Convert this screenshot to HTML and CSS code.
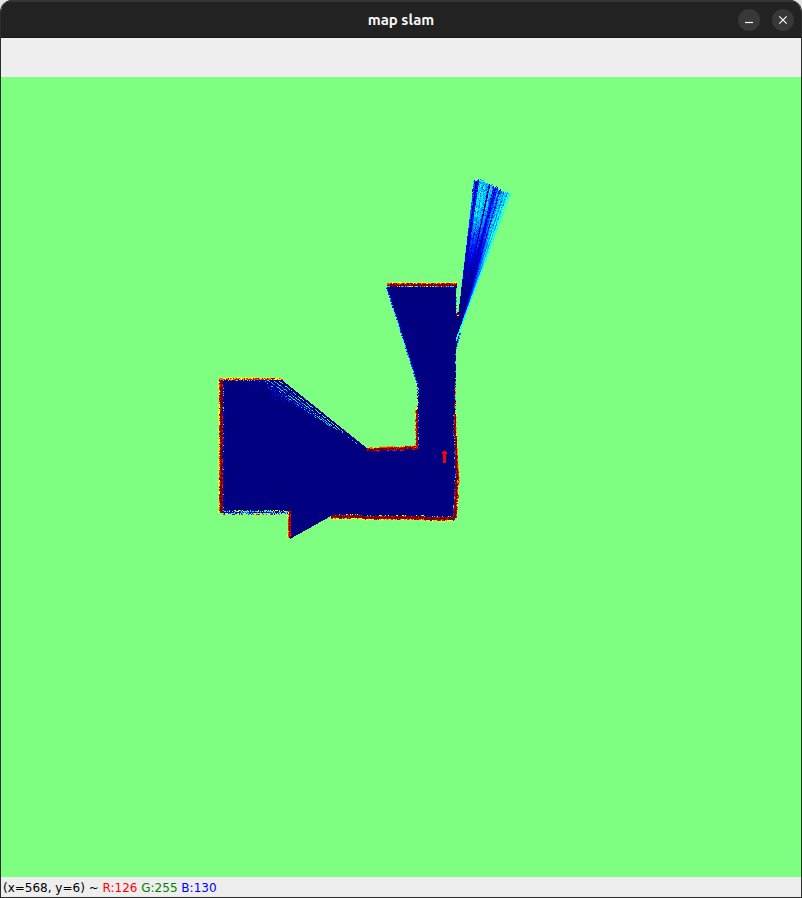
FILE: index.html
```html
<!DOCTYPE html>
<html lang="en">
<head>
<meta charset="utf-8">
<title>map slam</title>
<link rel="stylesheet" href="styles.css">
</head>
<body>
<main class="window">
  <header class="titlebar">
    <h1 class="title">map slam</h1>
    <div class="controls">
      <button class="control" type="button" aria-label="Minimize">
        <svg viewBox="0 0 22 22" aria-hidden="true"><path d="M7 13.5h8"/></svg>
      </button>
      <button class="control" type="button" aria-label="Close">
        <svg viewBox="0 0 22 22" aria-hidden="true"><path d="M7.3 7.3l7.4 7.4M14.7 7.3l-7.4 7.4"/></svg>
      </button>
    </div>
  </header>
  <div class="toolbar"></div>
  <canvas class="map" id="map" width="800" height="800"></canvas>
  <footer class="status">(x=568, y=6) ~ <span class="red">R:126</span> <span class="green">G:255</span> <span class="blue">B:130</span></footer>
</main>
<script src="map.js"></script>
</body>
</html>
```
FILE: styles.css
```css
* {
  box-sizing: border-box;
}

body {
  margin: 0;
  background: #e4e4e4;
}

.window {
  display: flex;
  flex-direction: column;
  min-height: 100vh;
  overflow: hidden;
  border: 1px solid #2c2c2c;
  border-top: 0;
  border-radius: 12px 12px 0 0;
  background: #eeeeee;
}

.titlebar {
  display: grid;
  grid-template-columns: 1fr auto 1fr;
  align-items: center;
  height: 38px;
  padding: 0 7px;
  border-top: 2px solid #353535;
  border-bottom: 1px solid #181818;
  background: #222222;
}

.title {
  grid-column: 2;
  margin: 0;
  color: #f7f7f7;
  font: bold 15px/20px Ubuntu, "Noto Sans", sans-serif;
}

.controls {
  display: flex;
  justify-content: flex-end;
  gap: 12px;
}

.control {
  width: 22px;
  height: 22px;
  padding: 0;
  border: 0;
  border-radius: 50%;
  background: #383838;
}

.control svg {
  display: block;
  fill: none;
  stroke: #f7f7f7;
  stroke-width: 1.2;
}

.toolbar {
  height: 39px;
}

.map {
  display: block;
  width: 100%;
  image-rendering: pixelated;
}

.status {
  padding: 2px 2px 0;
  color: #000000;
  font: 12px/18px "DejaVu Sans", sans-serif;
}

.red {
  color: #ff0000;
}

.green {
  color: #008000;
}

.blue {
  color: #0000ff;
}
```
FILE: map.js
```js
const ctx = document.getElementById("map").getContext("2d");

const COLORS = {
  n: "#000080", b: "#0000ff", m: "#0060ff", c: "#10e8f0",
  g: "#7eff82", y: "#ffff00", o: "#ff8000", r: "#ff1000", d: "#800000"
};

// Seeded generator, so the sensor noise is the same on each load.
let seed = 7;
function random() {
  seed = (seed * 1664525 + 1013904223) % 4294967296;
  return seed / 4294967296;
}

function dot(x, y, color) {
  ctx.fillStyle = color;
  ctx.fillRect(Math.round(x), Math.round(y), 1, 1);
}

// Occupancy value 0..1 on the jet colour scale.
function jet(v) {
  const part = (center) => {
    const level = Math.min(1, Math.max(0, 1.5 - Math.abs(4 * v - center)));
    return Math.round(level * 255);
  };
  return `rgb(${part(3)},${part(2)},${part(1)})`;
}

// A fan of free space, scanned row by row so that its edges stay hard.
function fillRows(points) {
  const ys = points.map((p) => p[1]);
  for (let y = Math.min(...ys); y < Math.max(...ys); y++) {
    const cuts = [];
    points.forEach(([x1, y1], i) => {
      const [x2, y2] = points[(i + 1) % points.length];
      const mid = y + 0.5;
      if ((y1 <= mid) !== (y2 <= mid)) {
        cuts.push(x1 + (x2 - x1) * (mid - y1) / (y2 - y1));
      }
    });
    cuts.sort((a, b) => a - b);
    ctx.fillStyle = COLORS.n;
    for (let i = 0; i + 1 < cuts.length; i += 2) {
      const left = Math.round(cuts[i]);
      ctx.fillRect(left, y, Math.round(cuts[i + 1]) - left, 1);
    }
  }
}

// Each string lists the colours that one layer of the wall picks from.
function wall(x1, y1, x2, y2, layers) {
  const vertical = Math.abs(y2 - y1) > Math.abs(x2 - x1);
  const steps = Math.max(Math.abs(x2 - x1), Math.abs(y2 - y1));
  for (let s = 0; s <= steps; s++) {
    const x = x1 + (x2 - x1) * s / steps;
    const y = y1 + (y2 - y1) * s / steps;
    layers.forEach((layer, k) => {
      const key = layer[Math.floor(random() * layer.length)];
      if (key === " ") return;
      dot(vertical ? x + k : x, vertical ? y : y + k, COLORS[key]);
    });
  }
}

// Relative brightness of the rays of the long beam, left to right.
const RAYS = [
  0.2, 0.06, 0.12, 0.32, 0.36, 0.28, 0.36, 0.32, 0.3, 0.04, 0.32, 0.28,
  0.14, 0.1, 0.18, 0.26, 0.14, 0.28, 0.34, 0.26, 0.38, 0.3, 0.42, 0.4
];

function longBeam() {
  for (let y = 179; y < 345; y++) {
    const left = y < 312 ? 473.5 - 0.117 * (y - 180) : 456;
    const right = 510 - 0.368 * (y - 194);
    for (let x = Math.round(left); x <= right; x++) {
      if (y < 180 + Math.max(0, x - 482) * 0.5 + random() * 3 - 1.5) continue;
      const t = (x - left) / Math.max(1, right - left);
      const far = Math.max(0, Math.min(1, (312 - y) / 132));
      const stripe = RAYS[Math.min(23, Math.floor(t * 24))];
      const fade = Math.min(1, far * far * 1.8 + Math.max(0, t - 0.5) * far * 2);
      const edge = Math.max(0, t - 0.65) * (1 - fade);
      const rim = right - x < 1.5 ? 0.38 : 0;
      const noise = (random() - 0.5) * 0.2 * far;
      const value = Math.max(rim, stripe * fade + edge + noise);
      dot(x, y, jet(Math.max(0, Math.min(0.44, value))));
    }
  }
}

function draw() {
  ctx.fillStyle = COLORS.g;
  ctx.fillRect(0, 0, 800, 800);
  ctx.translate(-1, -77);

  fillRows([
    [221, 380], [282, 380], [368, 449], [417, 449], [418, 386], [387, 288],
    [388, 285], [457, 285], [457, 314], [459, 312], [462, 312], [460, 334],
    [456, 350], [455, 400], [455, 516], [331, 516], [290, 539], [290, 512],
    [221, 512]
  ]);
  longBeam();

  // Sloped ends of the scans across the left room.
  [
    [278, 380, 342, 431, "ggccn"], [273, 380, 336, 429, "ccgcmn"],
    [268, 380, 330, 426, "cccmbn"], [263, 380, 315, 417, "cmbbn"],
    [257, 380, 304, 411, "mbbnn"], [251, 381, 296, 408, "bnnnn"],
    [245, 382, 286, 405, "bnnnnnn"]
  ].forEach(([x1, y1, x2, y2, layer]) => wall(x1, y1, x2, y2, [layer]));
  wall(342, 432, 358, 444, ["nnnnc"]);

  // Left room.
  wall(218, 379, 218, 512, ["   yy", "yyorrd", "rdddd", "dddddd", "ddrdrdn", "nnbcbnn", "nnnnnnb"]);
  wall(219, 377, 282, 377, ["    yy", "yorryod", "rrooydr", "nbncn r"]);
  wall(223, 510, 290, 510, ["nnnnncy", "ccbncyg", "bbcnnbm", "ccygbbg", "      rd"]);
  wall(287, 511, 287, 537, ["   y", "ryorr", "ddddr", "drddr", "nnnnb"]);

  // Corridor.
  wall(331, 514, 454, 516, ["nnnnnbcy", "drddrd", "dddddd", "dddddr", "ygdyro", "     y"]);
  wall(367, 447, 417, 445, ["   yoo", "rdrdo", "dddddr", "dddr", "nnnbr"]);
  wall(416, 384, 416, 412, ["  cyg", "cygng", "ncnbn"]);
  wall(415, 410, 415, 447, ["  oyr", "rdddr", "dddrd", "nnbbc"]);
  wall(455, 350, 455, 380, ["nnnnc"]);
  wall(454, 378, 454, 416, ["nnnnr", "cygron"]);
  wall(453, 414, 454, 458, ["nnncbr", "rdddrd", "dddrdd", "  gyo"]);
  wall(454, 455, 455, 482, ["nnncb", "rddd", "dddd", "drro", "  yo"]);
  wall(454, 480, 453, 517, ["nncrb", "dddr", "dddd", "rddo", "  gyr"]);

  // Upper room and the doorway beside it.
  wall(387, 282, 456, 282, ["    yy", "yorrdrd", "dddddr", "dddddd", "nrdyccb", "nnnnnb"]);
  wall(386, 287, 417, 384, ["cmcbc", "nbnn"]);
  wall(456, 288, 456, 314, ["cgmcy"]);
  wall(460, 332, 456, 348, ["cccm"]);
  wall(456, 314, 459, 314, ["rdd", " ny"]);
  wall(457, 312, 457, 316, ["rdy"]);

  // Robot marker, pointing up.
  ctx.fillStyle = "#ff0000";
  ctx.fillRect(443, 451, 3, 12);
  ctx.fillRect(442, 452, 5, 2);
}

draw();
```
